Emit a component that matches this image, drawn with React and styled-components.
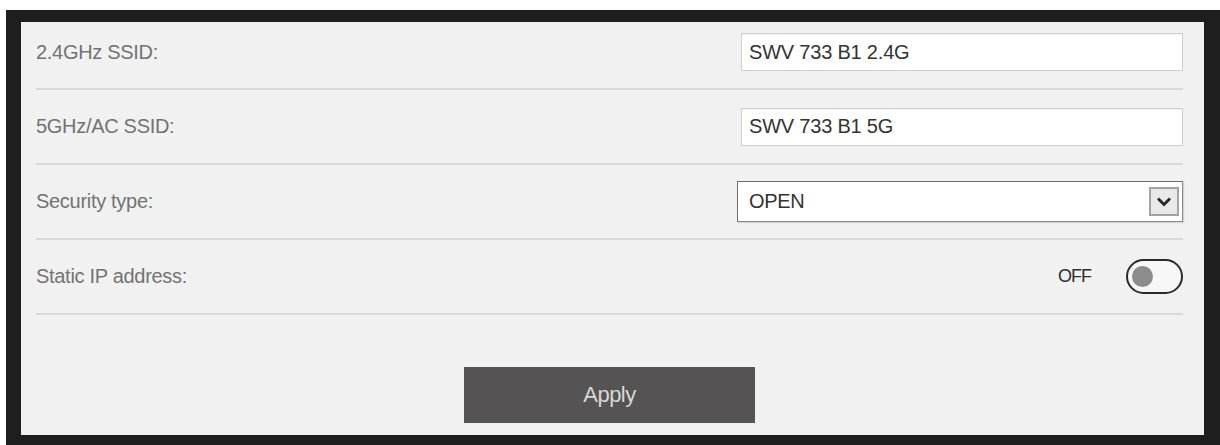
import React from "react";
import styled, { createGlobalStyle } from "styled-components";

const GlobalStyle = createGlobalStyle`
  html, body {
    margin: 0;
    padding: 0;
    background: #ffffff;
  }
  body {
    font-family: "Liberation Sans", Arial, sans-serif;
  }
`;

function WirelessSettings() {
  return (
    <Frame>
      <Row $first>
        <Label>2.4GHz SSID:</Label>
        <TextField defaultValue="SWV 733 B1 2.4G" />
      </Row>
      <Row>
        <Label>5GHz/AC SSID:</Label>
        <TextField defaultValue="SWV 733 B1 5G" />
      </Row>
      <Row>
        <Label>Security type:</Label>
        <SelectBox>
          <span>OPEN</span>
          <ArrowBox>
            <svg width="16" height="11" viewBox="0 0 16 11">
              <path d="M2 2.5 L8 8.5 L14 2.5" fill="none" stroke="#2a2a2a" strokeWidth="3" />
            </svg>
          </ArrowBox>
        </SelectBox>
      </Row>
      <Row>
        <Label>Static IP address:</Label>
        <SwitchWrap>
          <SwitchText>OFF</SwitchText>
          <Pill>
            <Knob />
          </Pill>
        </SwitchWrap>
      </Row>
      <Footer>
        <ApplyButton>Apply</ApplyButton>
      </Footer>
    </Frame>
  );
}

export default function App() {
  return (
    <>
      <GlobalStyle />
      <WirelessSettings />
    </>
  );
}

const Frame = styled.div`
  margin: 10px 0 0 6px;
  width: 1183px;
  height: 413px;
  box-sizing: content-box;
  border-style: solid;
  border-color: #1f1e1f;
  border-width: 12px 16px 10px 15px;
  background: #f1f1f1;
  display: flex;
  flex-direction: column;
`;

const Row = styled.div`
  display: flex;
  align-items: center;
  justify-content: space-between;
  box-sizing: border-box;
  height: ${(p) => (p.$first ? "68px" : "75px")};
  padding-bottom: ${(p) => (p.$first ? "6px" : "0")};
  margin: 0 21px 0 15px;
  border-bottom: 2px solid #d9d9d9;
`;

const Label = styled.div`
  font-size: 20px;
  color: #737373;
  letter-spacing: -0.3px;
`;

const TextField = styled.input`
  width: 442px;
  height: 38px;
  box-sizing: border-box;
  border: 1px solid #cfcfcf;
  box-shadow: inset 0 1px 1px rgba(0, 0, 0, 0.06);
  background: #ffffff;
  padding: 0 7px;
  font-family: "Liberation Sans", Arial, sans-serif;
  font-size: 20px;
  color: #333333;
  letter-spacing: -0.2px;
  outline: none;
`;

const SelectBox = styled.div`
  width: 446px;
  height: 41px;
  box-sizing: border-box;
  display: flex;
  align-items: center;
  justify-content: space-between;
  padding: 0 3px 0 11px;
  background: #ffffff;
  border: 1px solid #8a8a8a;
  border-top-color: #6e6e6e;
  border-left-color: #6e6e6e;
  box-shadow: 1px 1px 1px rgba(0, 0, 0, 0.12);
  font-size: 20px;
  color: #333333;
  letter-spacing: -0.3px;
`;

const ArrowBox = styled.span`
  width: 30px;
  height: 29px;
  box-sizing: border-box;
  display: flex;
  align-items: center;
  justify-content: center;
  border: 2px solid #a3a3a3;
  background: #e9e9e9;
`;

const SwitchWrap = styled.div`
  display: flex;
  align-items: center;
  gap: 35px;
`;

const SwitchText = styled.span`
  font-size: 18px;
  color: #2e2e2e;
  letter-spacing: -1px;
`;

const Pill = styled.div`
  width: 57px;
  height: 35px;
  box-sizing: border-box;
  border: 2.5px solid #2a2a2a;
  border-radius: 18px;
  background: #f7f7f7;
  display: flex;
  align-items: center;
  padding-left: 4px;
`;

const Knob = styled.div`
  width: 21px;
  height: 21px;
  border-radius: 50%;
  background: #8c8c8c;
`;

const Footer = styled.div`
  flex: 1;
  display: flex;
  justify-content: center;
  align-items: flex-start;
  padding-top: 52px;
  padding-right: 6px;
`;

const ApplyButton = styled.button`
  width: 291px;
  height: 56px;
  border: none;
  background: #555353;
  color: #d8d8d8;
  font-family: "Liberation Sans", Arial, sans-serif;
  font-size: 22px;
  letter-spacing: -0.5px;
  cursor: pointer;
`;
